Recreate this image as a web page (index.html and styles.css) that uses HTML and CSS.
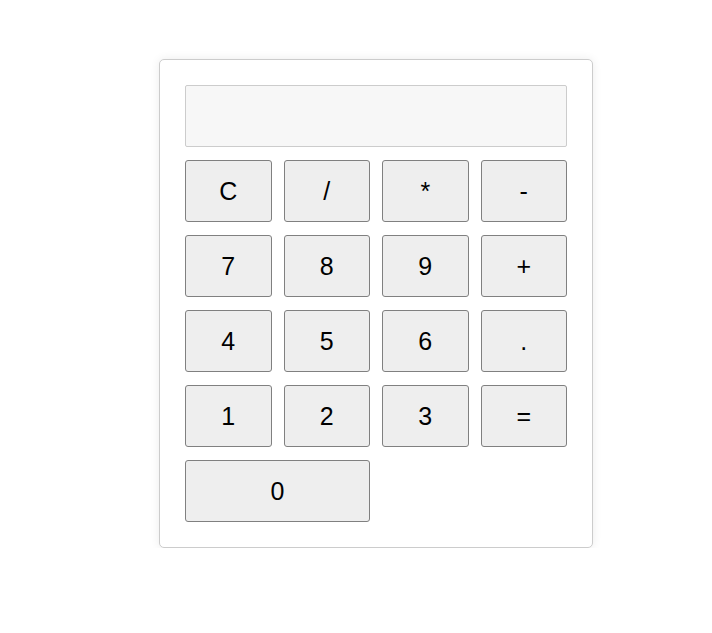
FILE: index.html
```html
<!DOCTYPE html>
<html lang="en">

<head>
    <meta charset="UTF-8" />
    <meta name="viewport" content="width=device-width, initial-scale=1.0" />
    <title>Calculator</title>
    <link rel="stylesheet" href="styles.css">
</head>

<body>
    <div class="calculator">
        <input type="text" class="display" id="display" readonly />
        <div class="keys">
            <button class="key">C</button>
            <button class="key">/</button>
            <button class="key">*</button>
            <button class="key">-</button>
            <button class="key">7</button>
            <button class="key">8</button>
            <button class="key">9</button>
            <button class="key">+</button>
            <button class="key">4</button>
            <button class="key">5</button>
            <button class="key">6</button>
            <button class="key">.</button>
            <button class="key">1</button>
            <button class="key">2</button>
            <button class="key">3</button>
            <button class="key">=</button>
            <button class="key zero">0</button>
        </div>
    </div>
</body>

</html>
```

FILE: styles.css
```css
* {
    box-sizing: border-box;
    margin: 0;
    padding: 0;
}

body {
    font-family: 'Liberation Sans', Arial, sans-serif;
    background: #fff;
    padding: 59px 0 0 159px;
}

.calculator {
    width: 434px;
    padding: 25px;
    border: 1px solid #ccc;
    border-radius: 5px;
    background: #fff;
    box-shadow: 0 0 10px rgba(0, 0, 0, 0.08);
}

.display {
    display: block;
    width: 100%;
    height: 62px;
    border: 1px solid #ccc;
    border-radius: 2px;
    background: #f7f7f7;
    font-family: inherit;
    font-size: 24px;
    text-align: right;
    padding: 0 10px;
    margin-bottom: 13px;
}

.keys {
    display: grid;
    grid-template-columns: repeat(4, 1fr);
    grid-auto-rows: 62px;
    column-gap: 12px;
    row-gap: 13px;
}

.key {
    font-family: inherit;
    font-size: 25px;
    color: #000;
    background: #eee;
    border: 1px solid #808080;
    border-radius: 3px;
    cursor: pointer;
}

.key:hover {
    background: #e2e2e2;
}

.zero {
    grid-column: span 2;
}
```
